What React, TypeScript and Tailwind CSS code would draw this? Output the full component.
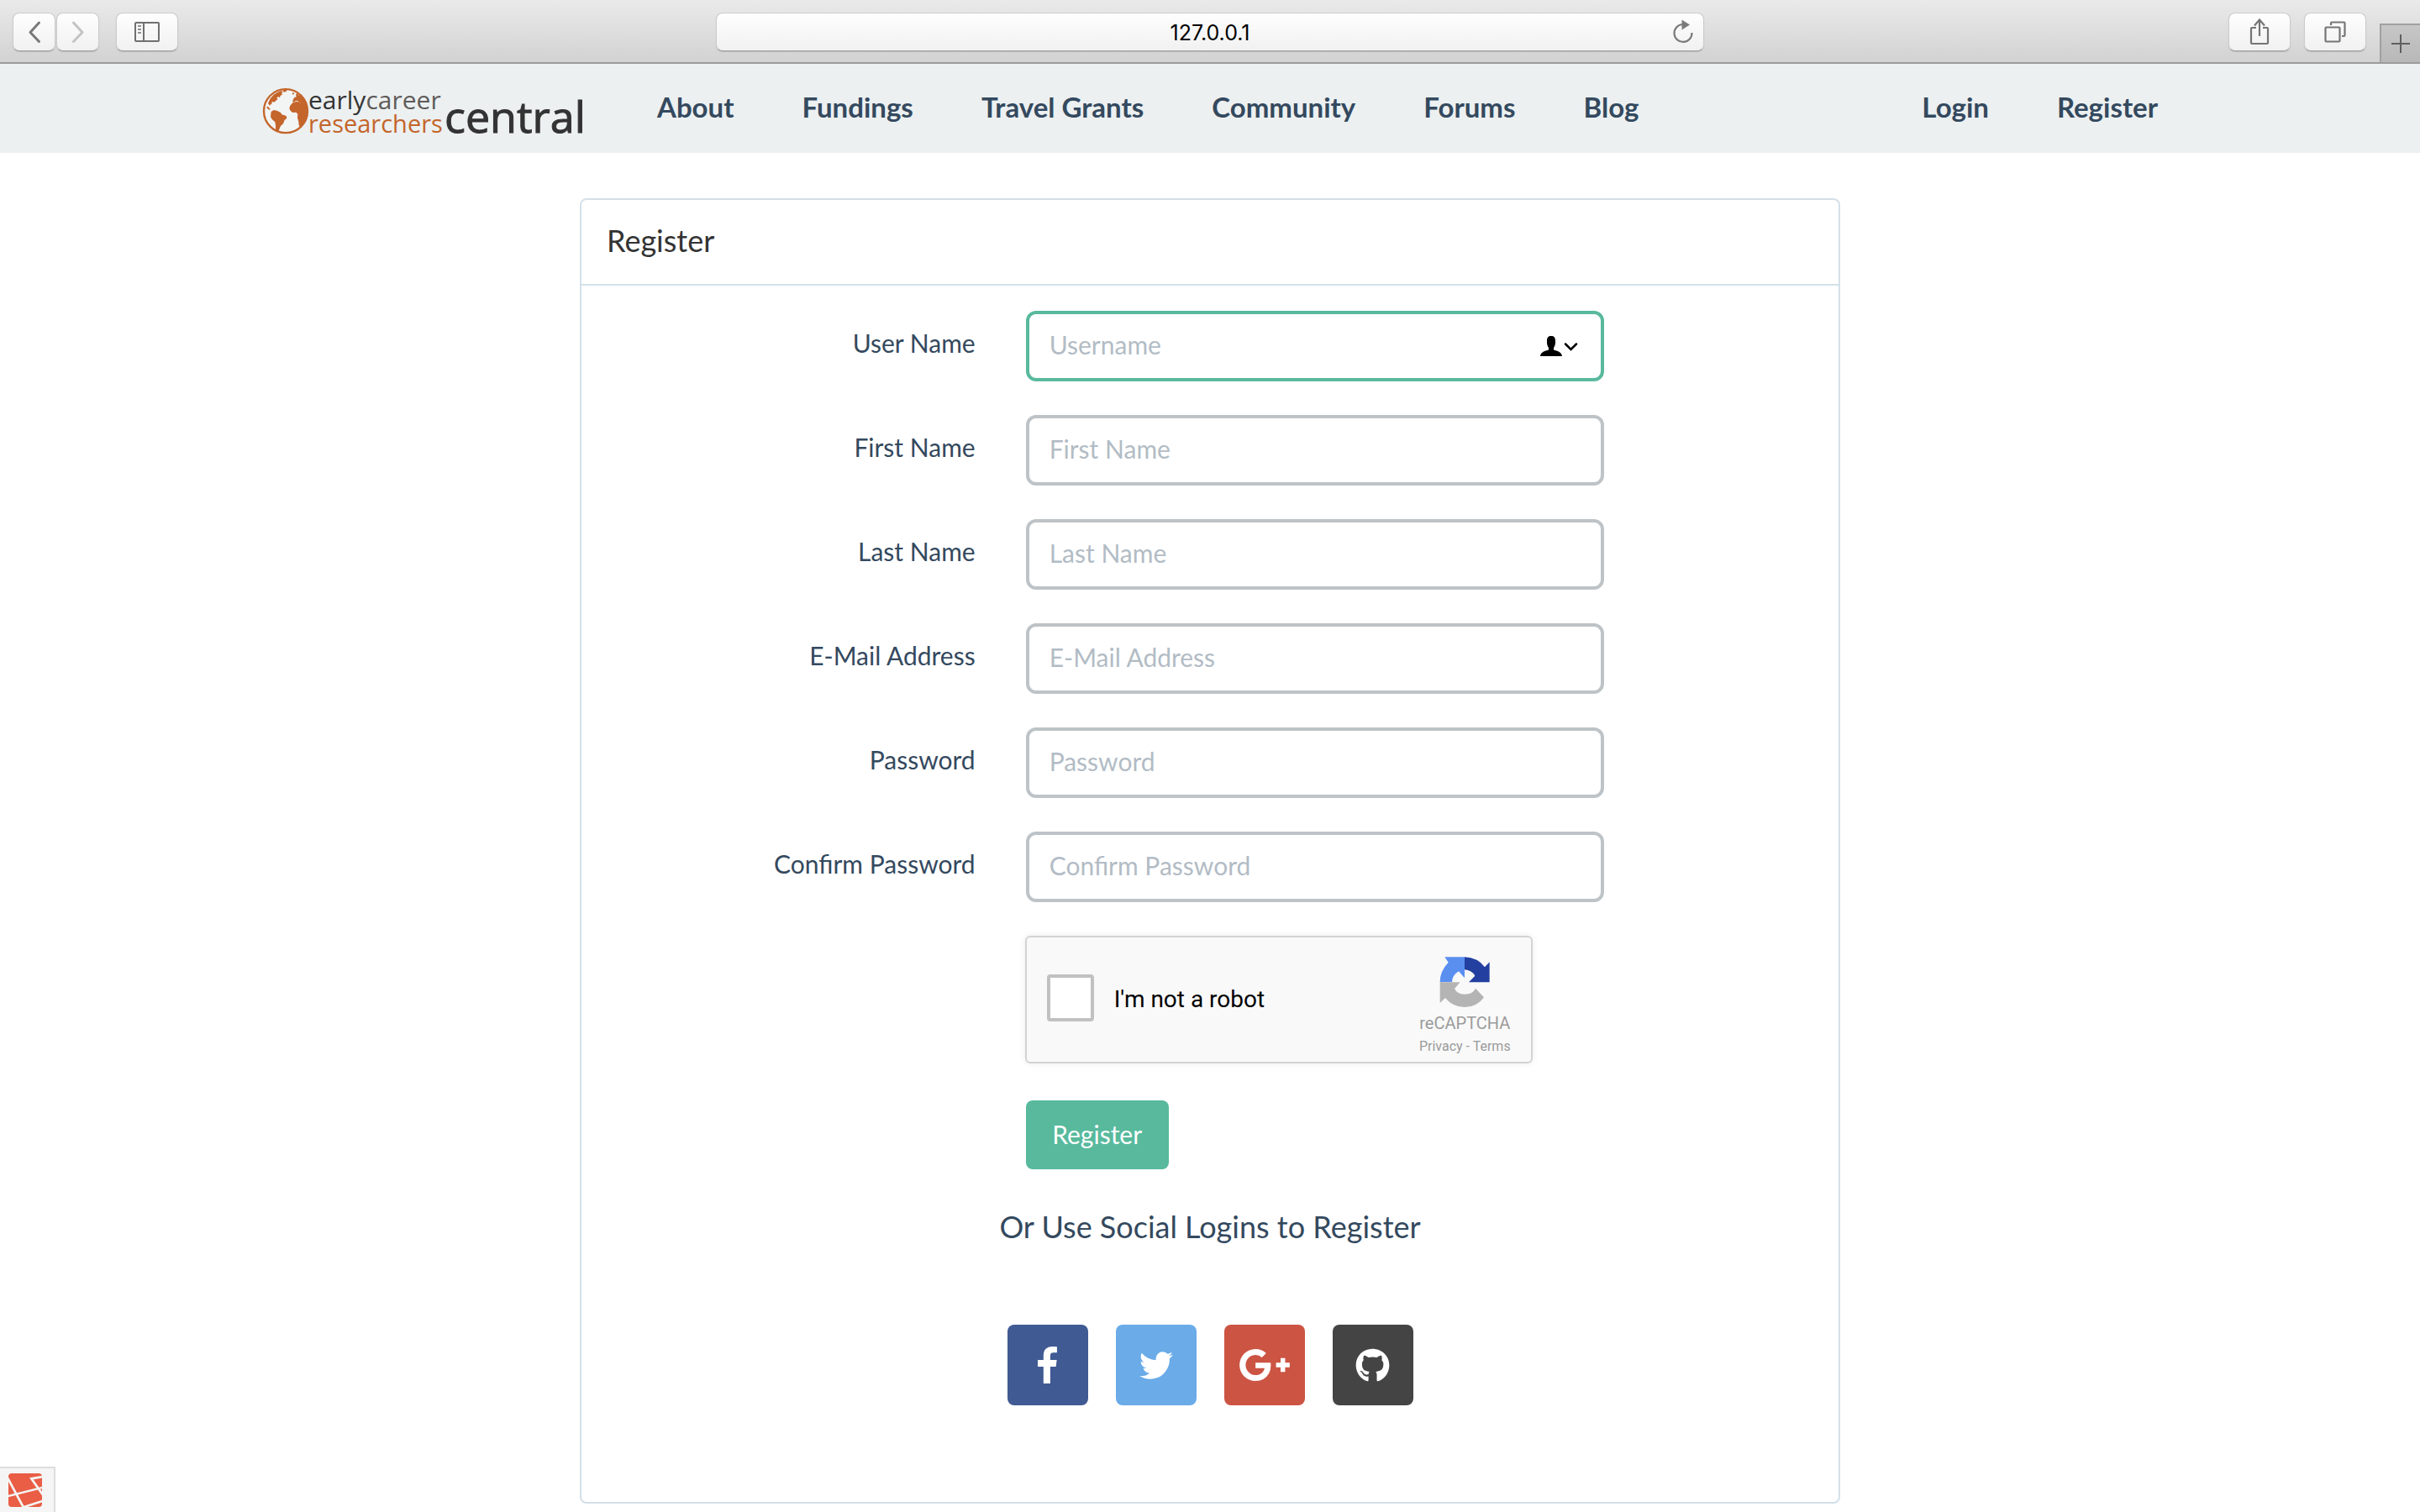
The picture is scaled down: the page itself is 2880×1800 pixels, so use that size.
import React from 'react';
import { FaGithub } from 'react-icons/fa';

const navLinks = ['About', 'Fundings', 'Travel Grants', 'Community', 'Forums', 'Blog'];
const accountLinks = ['Login', 'Register'];

const fields = [
  { id: 'username', label: 'User Name', placeholder: 'Username', type: 'text' },
  { id: 'first-name', label: 'First Name', placeholder: 'First Name', type: 'text' },
  { id: 'last-name', label: 'Last Name', placeholder: 'Last Name', type: 'text' },
  { id: 'email', label: 'E-Mail Address', placeholder: 'E-Mail Address', type: 'email' },
  { id: 'password', label: 'Password', placeholder: 'Password', type: 'password' },
  { id: 'password-confirm', label: 'Confirm Password', placeholder: 'Confirm Password', type: 'password' },
];

const toolButton =
  'flex h-[46px] items-center justify-center rounded-lg border border-[#cbcbcb] border-b-[#a3a3a3] bg-linear-to-b from-[#fefefe] to-[#f1f1f1] shadow-[0_1px_1px_rgba(0,0,0,0.15)]';

function BrowserBar() {
  return (
    <header className="grid h-[76px] grid-cols-[1fr_minmax(0,1176px)_1fr] border-b-2 border-[#9c9c9c] bg-linear-to-b from-[#eaeaea] to-[#d2d2d2]">
      <div className="flex items-start gap-5 pt-[15px] pl-[15px]">
        <div className="flex gap-px">
          <button type="button" aria-label="Back" className={`${toolButton} w-[51px]`}>
            <svg width="16" height="28" viewBox="0 0 16 28" fill="none" stroke="#787878" strokeWidth="3" strokeLinecap="round" strokeLinejoin="round">
              <path d="M13.500 3L3 14.500 13.500 25.500" />
            </svg>
          </button>
          <button type="button" aria-label="Forward" className={`${toolButton} w-[51px]`}>
            <svg width="16" height="28" viewBox="0 0 16 28" fill="none" stroke="#c3c3c3" strokeWidth="3" strokeLinecap="round" strokeLinejoin="round">
              <path d="M2.500 3L13 14.500 2.500 25.500" />
            </svg>
          </button>
        </div>
        <button type="button" aria-label="Show sidebar" className={`${toolButton} w-[74px]`}>
          <svg width="30" height="24" viewBox="0 0 30 24" fill="none" stroke="#707070" strokeWidth="2">
            <rect x="1" y="1" width="28" height="22" rx="1" />
            <path d="M11 1v22" />
            <path d="M4 5h4M4 9h4M4 13h4" stroke="#8f8f8f" />
          </svg>
        </button>
      </div>
      <div className="relative pt-[15px]">
        <input
          aria-label="Address"
          defaultValue="127.0.0.1"
          className={`${toolButton} w-full pt-0.5 text-center font-[Inter,sans-serif] text-[25px] leading-8 text-black outline-none`}
        />
        <button type="button" aria-label="Reload" className="absolute top-[22px] right-3">
          <svg width="26" height="30" viewBox="0 0 26 30" fill="none">
            <path d="M12 7A10.500 10.500 0 1 0 23.500 17" stroke="#7b7b7b" strokeWidth="2.200" />
            <path d="M11.500 1.500L21 7.500 11.500 13.500z" fill="#7b7b7b" />
          </svg>
        </button>
      </div>
      <div className="flex items-start justify-end gap-4 pt-[15px]">
        <button type="button" aria-label="Share" className={`${toolButton} w-[74px]`}>
          <svg width="24" height="34" viewBox="0 0 24 34" fill="none" stroke="#757575" strokeWidth="2.200">
            <path d="M8 12H3q-1 0-1 1v17q0 1 1 1h18q1 0 1-1V13q0-1-1-1h-5M12 2.500V22M6 9.500L12 2.500l6 7" />
          </svg>
        </button>
        <button type="button" aria-label="Show all tabs" className={`${toolButton} w-[74px]`}>
          <svg width="26" height="26" viewBox="0 0 26 26" fill="none" stroke="#757575" strokeWidth="2.200">
            <rect x="1.500" y="7.500" width="17" height="17" rx="1" />
            <path d="M8 5V2.500q0-1 1-1h14.500q1 0 1 1V17q0 1-1 1H21" />
          </svg>
        </button>
        <button
          type="button"
          aria-label="New tab"
          className="flex h-[46px] w-12 items-center justify-center self-end border-t-2 border-l-2 border-[#a0a0a0] bg-linear-to-b from-[#c6c6c6] to-[#b8b8b8]"
        >
          <svg width="24" height="24" viewBox="0 0 24 24" stroke="#5f5f5f" strokeWidth="2">
            <path d="M12 1v22M1 12h22" />
          </svg>
        </button>
      </div>
    </header>
  );
}

function Logo() {
  return (
    <svg width="400" height="78" viewBox="0 -8 400 78" role="img" aria-label="Early Career Researchers Central">
      <svg x="0" y="0" width="56" height="56" viewBox="37 29 168 168">
        <circle cx="121" cy="113.500" r="78" fill="#f3f5f5" stroke="#c4652b" strokeWidth="7" />
        <g fill="#c4652b">
          <path d="M58 85l8-16 12-14 14-9 14-5 5 6-6 3 5 4-8 5-2 7-6-4-5 5 4 5-7 4-5 6-7-2-4 6 3 4-6-1-3 6-4-6z" />
          <path d="M112 39l10-2 4 4-8 5-7-2z" />
          <path d="M52 98l7 0 3 5 5 3-3 3-7-3z" />
          <path d="M69 116l9-6 12 2 13 7 4 7 16 5 2 8-8 7-5 13-9 8-4 9-4 11-7 2-3-11 0-13-2-12-11-10-5-9z" />
          <path d="M148 72l4-7 7-2-2-8 5-6 6 9 6-5 7 8 9 13 6 14-10-3-8 3-9-6-5-5-9 1-4 4-6-2z" />
          <path d="M146 84l12-4 10 1 6 5 13-1 9 2 3 20-1 18-6 20-9 15-10 12-5-8-1-13-4-13 1-14-6-6-12 1-7-5-5-9 3-11z" />
          <path d="M144 50l5-3 3 4-5 5z" />
        </g>
      </svg>
      <g fontFamily="'Open Sans', sans-serif" fontWeight="400">
        <text x="55" y="26" fontSize="30" fill="#333">
          early<tspan fill="#5f5b59">career</tspan>
        </text>
        <text x="55" y="54" fontSize="29" fill="#c4652b">
          researchers
        </text>
        <text x="217" y="54" fontSize="52" fontWeight="500" fill="#333" stroke="#333" strokeWidth="1">
          central
        </text>
      </g>
    </svg>
  );
}

function SiteNav() {
  return (
    <nav className="bg-[#ecf0f1]">
      <div className="mx-auto flex h-[106px] max-w-[2340px] items-start px-[42px] text-[33px] leading-10 font-bold text-[#34495e]">
        <a href="#home" className="mr-[70px] pt-5">
          <Logo />
        </a>
        <ul className="flex gap-[81px] pt-[31px]">
          {navLinks.map((name) => (
            <li key={name}>
              <a href={`#${name.toLowerCase().replace(' ', '-')}`}>{name}</a>
            </li>
          ))}
        </ul>
        <ul className="ml-auto flex gap-[81px] pt-[31px]">
          {accountLinks.map((name) => (
            <li key={name}>
              <a href={`#${name.toLowerCase()}`}>{name}</a>
            </li>
          ))}
        </ul>
      </div>
    </nav>
  );
}

function Recaptcha() {
  return (
    <div className="flex h-[152px] w-[604px] justify-between rounded-md border-2 border-[#d3d3d3] bg-[#f9f9f9] px-6 font-[Roboto,sans-serif] shadow-[0_0_8px_rgba(0,0,0,0.08)]">
      <label className="flex items-center gap-6 text-[28px] leading-8 text-black">
        <input type="checkbox" className="mb-1 size-14 appearance-none rounded-sm border-4 border-[#c1c1c1] bg-white" />
        I'm not a robot
      </label>
      <div className="flex flex-col items-center pt-[22px] text-[#9b9b9b]">
        <svg width="62" height="64" viewBox="159 111 186 192">
          <path d="M181 115H252V190L231 166Q208 180 207 204H164Q164 165 194 134Z" fill="#5a8ff0" />
          <path d="M252 115Q299 117 324 151L341 133V205H267L289 182Q278 162 252 160Z" fill="#2340a0" />
          <path d="M164 205H236L216 228Q226 248 252 248Q281 248 291 227L321 259Q297 294 252 294Q210 294 183 261L164 279Z" fill="#b4b4b4" />
        </svg>
        <p className="mt-1 text-xl leading-6">reCAPTCHA</p>
        <p className="mt-1 text-base leading-6">
          <a href="#privacy">Privacy</a> - <a href="#terms">Terms</a>
        </p>
      </div>
    </div>
  );
}

function SocialLogins() {
  const tile = 'flex size-24 items-center justify-center rounded-lg text-white';
  return (
    <div className="flex justify-center gap-[33px]">
      <a href="#facebook" aria-label="Facebook" className={`${tile} bg-[#405a93]`}>
        <svg width="23" height="44" viewBox="479 0 864 1664" fill="currentColor">
          <path d="M1343 12v264h-157q-86 0-116 36t-30 108v189h293l-39 296h-254v759h-306v-759h-255v-296h255v-218q0-186 104-288.500t277-102.500q147 0 228 12z" />
        </svg>
      </a>
      <a href="#twitter" aria-label="Twitter" className={`${tile} bg-[#6aabe8]`}>
        <svg width="40" height="33" viewBox="108 256 1576 1280" fill="currentColor">
          <path d="M1684 408q-67 98-162 167 1 14 1 42 0 130-38 259.500t-115.500 248.500-184.500 210.500-258 146-323 54.500q-271 0-496-145 35 4 78 4 225 0 401-138-105-2-188-64.500t-114-159.500q33 5 61 5 43 0 85-11-112-23-185.500-111.500t-73.500-205.500v-4q68 38 146 41-66-44-105-115t-39-154q0-88 44-163 121 149 294.500 238.500t371.500 99.500q-8-38-8-74 0-134 94.500-228.500t228.500-94.500q140 0 236 102 109-21 205-78-37 115-142 178 93-10 186-50z" />
        </svg>
      </a>
      <a href="#google-plus" aria-label="Google Plus" className={`${tile} bg-[#cc5443]`}>
        <svg width="60" height="38" viewBox="0 163 2304 1466" fill="currentColor">
          <path d="M1437 913q0 208-87 370.500t-248 254-369 91.500q-149 0-285-58t-234-156-156-234-58-285 58-285 156-234 234-156 285-58q286 0 491 192l-199 191q-117-113-292-113-123 0-227.500 62t-165.500 168.500-61 232.500 61 232.500 165.500 168.500 227.500 62q83 0 152.500-23t114.500-57.500 78.500-78.500 49-83 21.500-74h-416v-252h692q12 63 12 122zm867-122v210h-209v209h-210v-209h-209v-210h209v-209h210v209h209z" />
        </svg>
      </a>
      <a href="#github" aria-label="GitHub" className={`${tile} bg-[#444444]`}>
        <FaGithub size={41} />
      </a>
    </div>
  );
}

function RegisterPanel() {
  return (
    <section className="mx-auto mt-[54px] w-full max-w-[1500px] rounded-lg border-2 border-[#d3e0e9] bg-white">
      <h1 className="border-b-2 border-[#d3e0e9] px-[30px] pt-[26px] pb-[30px] text-[36px] leading-[44px] text-[#333]">
        Register
      </h1>
      <form className="pt-[30px]">
        <div className="grid grid-cols-3 gap-y-10">
          {fields.map((field, index) => (
            <React.Fragment key={field.id}>
              <label htmlFor={field.id} className="pt-5 pr-[30px] text-right text-[30px] leading-9">
                {field.label}
              </label>
              <div className="relative col-span-2 ml-[30px] w-[688px]">
                <input
                  id={field.id}
                  type={field.type}
                  placeholder={field.placeholder}
                  className={`h-[84px] w-full rounded-xl border-4 bg-white px-6 pb-1 text-[30px] leading-9 outline-none placeholder:text-[#b2bcc5] placeholder:opacity-100 ${
                    index === 0 ? 'border-[#58b99d]' : 'border-[#bdc3c7]'
                  }`}
                />
                {index === 0 && (
                  <button type="button" aria-label="Autofill contact" className="absolute top-[29px] right-[31px]">
                    <svg width="46" height="26" viewBox="0 0 46 26">
                      <path
                        d="M14 1c3.500 0 5 2 5 5.500v2.500c0 2-.8 4.500-2 6v2.500c4 1 9.500 2.500 10 7.500H1c.5-5 6-6.500 10-7.500V15c-1.200-1.500-2-4-2-6V6.500C9 3 10.500 1 14 1z"
                        fill="black"
                      />
                      <path d="M31 10.500l6.500 6.500 6.500-6.500" fill="none" stroke="black" strokeWidth="2.500" strokeLinecap="round" />
                    </svg>
                  </button>
                )}
              </div>
            </React.Fragment>
          ))}
          <div className="col-span-2 col-start-2 pl-[29px]">
            <Recaptcha />
            <button
              type="submit"
              className="mt-11 ml-px h-[82px] w-[170px] rounded-lg bg-[#58b99d] pb-0.5 text-[30px] leading-9 text-white"
            >
              Register
            </button>
          </div>
        </div>
      </form>
      <h2 className="mt-[46px] text-center text-[36px] leading-[44px]">Or Use Social Logins to Register</h2>
      <div className="pt-[95px] pb-[115px]">
        <SocialLogins />
      </div>
    </section>
  );
}

function DebugBadge() {
  return (
    <a
      href="#debugbar"
      aria-label="Open debug bar"
      className="fixed bottom-0 left-0 flex h-[54px] w-[66px] items-start border-t-2 border-r-2 border-[#dddddd] bg-[#f5f5f5] pt-[6px] pl-[10px]"
    >
      <svg width="40" height="40" viewBox="0 0 120 120">
        <defs>
          <clipPath id="badge">
            <rect width="120" height="120" rx="12" />
          </clipPath>
        </defs>
        <g clipPath="url(#badge)">
          <rect width="120" height="120" fill="#e95e45" />
          <path
            d="M-4 14L54 122M-4 82L124 50M56 120L124 98M124 12L82 19L124 78"
            fill="none"
            stroke="#f5f5f5"
            strokeWidth="8"
          />
        </g>
      </svg>
    </a>
  );
}

export default function App() {
  return (
    <div className="min-h-screen bg-white font-[Lato,sans-serif] text-[#34495e]">
      <BrowserBar />
      <SiteNav />
      <main>
        <RegisterPanel />
      </main>
      <DebugBadge />
    </div>
  );
}
